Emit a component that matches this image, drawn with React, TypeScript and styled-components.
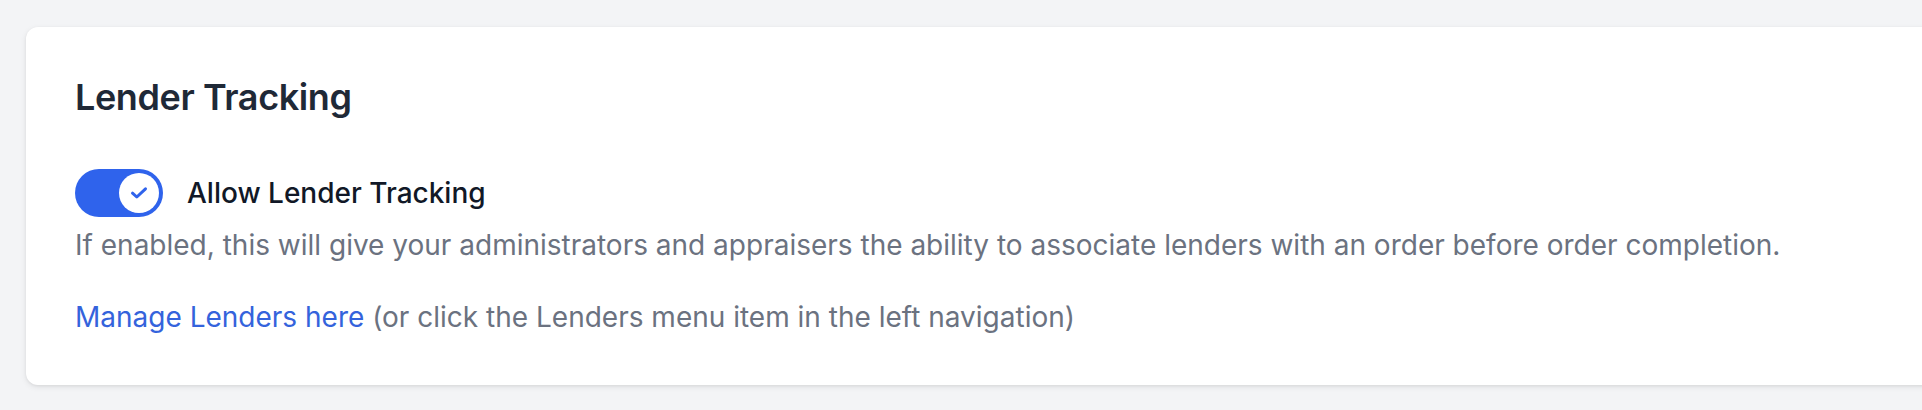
import React from "react";
import styled, { createGlobalStyle } from "styled-components";

const GlobalStyle = createGlobalStyle`
  html, body {
    margin: 0;
    padding: 0;
    overflow: hidden;
    background: #f3f4f6;
  }
  body {
    font-family: Inter, "Noto Sans", "Liberation Sans", sans-serif;
    -webkit-font-smoothing: antialiased;
  }
`;

const Page = styled.div`
  width: 1922px;
  height: 410px;
  padding: 27px 0 0 26px;
  box-sizing: border-box;
  background: #f3f4f6;
`;

const Card = styled.section`
  width: 1940px;
  box-sizing: border-box;
  background: #ffffff;
  border-radius: 12px;
  box-shadow: 0 2px 6px rgba(0, 0, 0, 0.08), 0 1px 3px rgba(0, 0, 0, 0.06);
  padding: 48px 48px 48px 49px;
  display: flex;
  flex-direction: column;
`;

const Title = styled.h2`
  margin: 0 0 49px;
  font-size: 36px;
  line-height: 45px;
  font-weight: 600;
  letter-spacing: -0.4px;
  color: #1f2937;
`;

const ToggleRow = styled.div`
  display: flex;
  align-items: center;
  gap: 24px;
`;

const Track = styled.button<{ $on: boolean }>`
  width: 88px;
  height: 48px;
  border: none;
  padding: 4px;
  border-radius: 24px;
  background: ${(p) => (p.$on ? "#2f63ec" : "#e5e7eb")};
  display: flex;
  justify-content: ${(p) => (p.$on ? "flex-end" : "flex-start")};
  align-items: center;
  box-sizing: border-box;
  cursor: pointer;
`;

const Knob = styled.span`
  width: 40px;
  height: 40px;
  border-radius: 50%;
  background: #ffffff;
  display: flex;
  align-items: center;
  justify-content: center;
`;

const Label = styled.span`
  font-size: 28px;
  line-height: 40px;
  font-weight: 500;
  color: #111827;
`;

const Description = styled.p`
  margin: 8px 0 0;
  font-size: 28px;
  line-height: 40px;
  color: #6b7280;
`;

const Note = styled.p`
  margin: 32px 0 0;
  font-size: 28px;
  line-height: 40px;
  color: #6b7280;
`;

const Link = styled.a`
  color: #3463dc;
  text-decoration: none;
`;

export default function App() {
  return (
    <>
      <GlobalStyle />
      <Page>
        <Card>
          <Title>Lender Tracking</Title>
          <ToggleRow>
            <Track $on aria-pressed="true">
              <Knob>
                <svg width="18" height="14" viewBox="0 0 18 14" fill="none">
                  <path
                    d="M2.5 7.2 L6.8 11 L15.5 2.8"
                    stroke="#2f63ec"
                    strokeWidth="3"
                    strokeLinecap="round"
                    strokeLinejoin="round"
                  />
                </svg>
              </Knob>
            </Track>
            <Label>Allow Lender Tracking</Label>
          </ToggleRow>
          <Description>
            If enabled, this will give your administrators and appraisers the ability to associate lenders with an order before order completion.
          </Description>
          <Note>
            <Link href="#">Manage Lenders here</Link> (or click the Lenders menu item in the left navigation)
          </Note>
        </Card>
      </Page>
    </>
  );
}
